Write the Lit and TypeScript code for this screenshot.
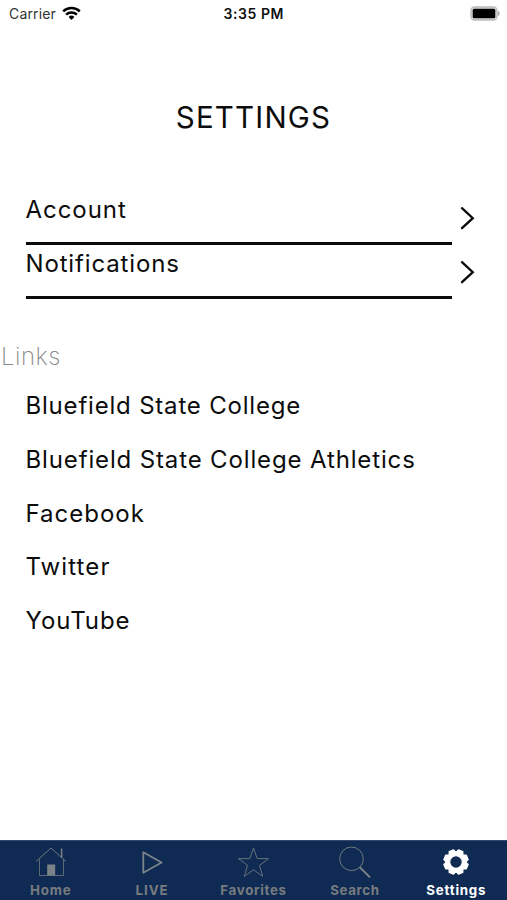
import { LitElement, html, css, svg } from "lit";
import { customElement, property } from "lit/decorators.js";
import { classMap } from "lit/directives/class-map.js";
import { styleMap } from "lit/directives/style-map.js";

interface Label {
  text: string;
  spacing: number;
}

const ACCOUNT_ROWS: Label[] = [
  { text: "Account", spacing: 0.95 },
  { text: "Notifications", spacing: 0.85 },
];

const LINKS: Label[] = [
  { text: "Bluefield State College", spacing: 0.8 },
  { text: "Bluefield State College Athletics", spacing: 0.86 },
  { text: "Facebook", spacing: 1 },
  { text: "Twitter", spacing: 1.1 },
  { text: "YouTube", spacing: 0.95 },
];

const GEAR = (() => {
  const points: string[] = [];
  const teeth = 8;
  for (let i = 0; i < teeth; i++) {
    const mid = (i * 2 * Math.PI) / teeth + Math.PI / teeth;
    for (const [offset, radius] of [
      [-0.34, 10.1],
      [-0.19, 12.3],
      [0.19, 12.3],
      [0.34, 10.1],
    ]) {
      points.push(
        `${(16 + radius * Math.cos(mid + offset)).toFixed(2)} ${(16 + radius * Math.sin(mid + offset)).toFixed(2)}`
      );
    }
  }
  return `M${points.join("L")}ZM16 9.6a6.4 6.4 0 1 0 0 12.8a6.4 6.4 0 1 0 0 -12.8Z`;
})();

const ICONS = {
  home: svg`<g fill="none" stroke="currentColor" stroke-width=".9">
      <path d="M1 15.5L16 2L31 15.5" /><path d="M4.5 13.5V29.5H28.5V13.5" opacity=".8" />
      <path d="M26.6 11.5V2.5" stroke-width="1.5" /></g>
      <path d="M12.2 18.5H20.2V29.5H12.2Z" fill="currentColor" />`,
  live: svg`<path d="M7.3 6.2V26.8L25.6 16.5Z" fill="none" stroke="currentColor" stroke-width="1.8" stroke-linejoin="round" />`,
  star: svg`<path d="M16.5 2L20.2 12.6H31.5L22.5 19.4L25.7 30.3L16.5 23.8L7.3 30.3L10.5 19.4L1.5 12.6H12.8Z" fill="none" stroke="currentColor" stroke-width=".8" />`,
  search: svg`<circle cx="12.5" cy="12.8" r="11.8" fill="none" stroke="currentColor" stroke-width=".9" />
      <path d="M20.8 21.3L31 31.4" stroke="currentColor" stroke-width="1.9" />`,
  gear: svg`<path d=${GEAR} fill="currentColor" stroke="currentColor" stroke-width="1.4" stroke-linejoin="round" fill-rule="evenodd" />`,
};

const TABS: { text: string; icon: keyof typeof ICONS; spacing: number }[] = [
  { text: "Home", icon: "home", spacing: 0.8 },
  { text: "LIVE", icon: "live", spacing: 0.95 },
  { text: "Favorites", icon: "star", spacing: 0.7 },
  { text: "Search", icon: "search", spacing: 0.6 },
  { text: "Settings", icon: "gear", spacing: 0.8 },
];

const spaced = (value: number) => styleMap({ letterSpacing: `${value}px` });

@customElement("status-bar")
class StatusBar extends LitElement {
  static styles = css`
    :host {
      display: grid;
      grid-template-columns: 1fr auto 1fr;
      align-items: center;
      height: 28px;
      padding: 0 6px 0 9px;
      font-size: 14px;
      color: #111;
    }
    .carrier { display: flex; align-items: center; gap: 6px; letter-spacing: 0.15px; color: #333; }
    .carrier span, .time { padding-bottom: 2px; }
    .wifi { width: 19px; height: 15px; margin-top: -2px; color: #000; }
    .time { font-weight: 600; letter-spacing: 0.55px; margin-right: 2.5px; }
    .battery { width: 31px; height: 15px; justify-self: end; margin-top: -2px; }
  `;
  render() {
    return html`
      <div class="carrier">
        <span>Carrier</span>
        <svg class="wifi" viewBox="0 0 19 15" fill="none" stroke="currentColor" stroke-width="2.5">
          <path d="M1.2 5.4A12 12 0 0 1 17.8 5.4" /><path d="M4.1 8.6A8 8 0 0 1 14.9 8.6" />
          <path d="M6.6 11A4.2 4.2 0 0 1 12.4 11L9.5 14Z" fill="currentColor" stroke="none" />
        </svg>
      </div>
      <span class="time">3:35 PM</span>
      <svg class="battery" viewBox="0 0 31 15">
        <rect x="1" y="1" width="26" height="13" rx="3.5" fill="#ddd" stroke="#bbb" stroke-width="1.4" />
        <rect x="2.7" y="2.8" width="22.6" height="9.5" rx="1.5" fill="#000" />
        <path d="M28.4 5.5Q30.4 7.5 28.4 9.5Z" fill="#aaa" stroke="#aaa" />
      </svg>
    `;
  }
}

@customElement("tab-bar")
class TabBar extends LitElement {
  @property() active = "Settings";
  static styles = css`
    :host {
      display: grid;
      grid-template-columns: repeat(5, 1fr);
      height: 60px;
      box-sizing: border-box;
      border-top: 1px solid #34496b;
      background: #0f2b53;
    }
    .tab {
      display: flex;
      flex-direction: column;
      align-items: center;
      padding-top: 5px;
      color: #777b80;
      font-size: 13.3px;
      font-weight: 700;
      line-height: 16px;
      white-space: nowrap;
    }
    .tab svg { width: 32px; height: 32px; margin-bottom: 4px; color: #7c8388; }
    .tab.active, .tab.active svg { color: #fff; }
  `;
  render() {
    return TABS.map(
      (tab) => html`<div class=${classMap({ tab: true, active: tab.text === this.active })}>
        <svg viewBox="0 0 32 32">${ICONS[tab.icon]}</svg>
        <span style=${spaced(tab.spacing)}>${tab.text}</span>
      </div>`
    );
  }
}

@customElement("app-root")
class AppRoot extends LitElement {
  static styles = css`
    :host {
      display: flex;
      flex-direction: column;
      height: 900px;
      background: #fff;
      color: #0c0c0c;
      font-family: "Inter", "Liberation Sans", sans-serif;
    }
    main { flex: 1; }
    h1 {
      margin: 69px 0 53px;
      font-size: 29.5px;
      font-weight: 400;
      line-height: 41px;
      text-align: center;
      letter-spacing: 1.2px;
    }
    .row, .link { font-size: 24px; line-height: 30px; white-space: nowrap; font-weight: 400; }
    .row { display: grid; grid-template-columns: 426.5px auto; column-gap: 7px; height: 54px; padding-left: 25.5px; }
    .label { box-sizing: border-box; padding-top: 4.4px; border-bottom: 3px solid #0b0b0b; }
    .chevron { width: 16px; height: 26px; margin-top: 14px; fill: none; stroke: #0b0b0b; stroke-width: 2.3; stroke-linecap: round; }
    h2 {
      margin: 43px 0 0 1px;
      font-size: 24px;
      line-height: 30px;
      font-weight: 250;
      color: #888;
      letter-spacing: 0.5px;
    }
    .links { display: flex; flex-direction: column; gap: 23.8px; padding: 19px 0 0 25.5px; }
  `;
  render() {
    return html`
      <status-bar></status-bar>
      <main>
        <h1>SETTINGS</h1>
        ${ACCOUNT_ROWS.map(
          (row) => html`<div class="row">
            <div class="label"><span style=${spaced(row.spacing)}>${row.text}</span></div>
            <svg class="chevron" viewBox="0 0 16 26"><path d="M3 3.2L13.8 13.2L3 23.2" /></svg>
          </div>`
        )}
        <h2>Links</h2>
        <div class="links">
          ${LINKS.map((link) => html`<div class="link"><span style=${spaced(link.spacing)}>${link.text}</span></div>`)}
        </div>
      </main>
      <tab-bar></tab-bar>
    `;
  }
}
